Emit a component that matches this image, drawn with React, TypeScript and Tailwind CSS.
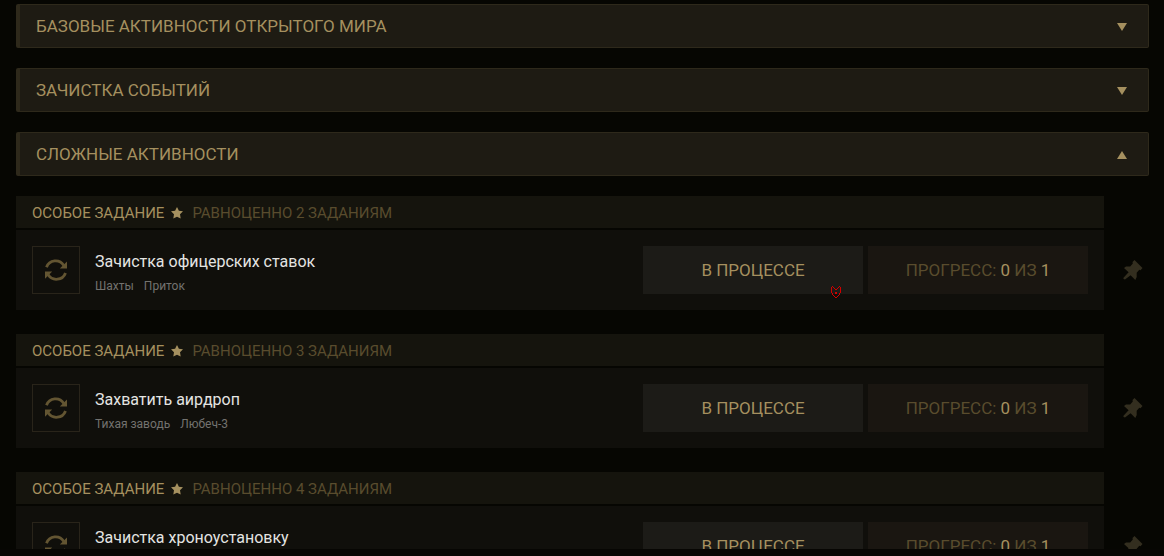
import { useState } from 'react';

type Task = { id: number; equal: number; title: string; places: string[]; done: number; total: number };

const tasks: Task[] = [
  { id: 1, equal: 2, title: 'Зачистка офицерских ставок', places: ['Шахты', 'Приток'], done: 0, total: 1 },
  { id: 2, equal: 3, title: 'Захватить аирдроп', places: ['Тихая заводь', 'Любеч-3'], done: 0, total: 1 },
  { id: 3, equal: 4, title: 'Зачистка хроноустановку', places: [], done: 0, total: 1 },
];

const sections = ['БАЗОВЫЕ АКТИВНОСТИ ОТКРЫТОГО МИРА', 'ЗАЧИСТКА СОБЫТИЙ', 'СЛОЖНЫЕ АКТИВНОСТИ'];

function Arrow({ up }: { up: boolean }) {
  return (
    <svg className="h-2 w-[10px] fill-[#a5905f]" viewBox="0 0 10 8" aria-hidden="true">
      <path d={up ? 'M0 8 5 0l5 8z' : 'M0 0h10L5 8z'} />
    </svg>
  );
}

function Star() {
  return (
    <svg className="h-3 w-3 fill-[#a5905f]" viewBox="0 0 12 12" aria-hidden="true">
      <path d="M6 0l1.900 3.700 4.100.600-3 2.900.700 4.300L6 9.700l-3.700 1.800.700-4.300L0 4.300l4.100-.600z" />
    </svg>
  );
}

function Repeat() {
  return (
    <svg className="h-6 w-6" viewBox="0 0 24 24" aria-hidden="true">
      <g fill="none" stroke="#635532" strokeWidth="2.8">
        <path d="M2.5 9.300A9.700 9.700 0 0 1 19.800 7.400" />
        <path d="M21.500 14.900A9.700 9.700 0 0 1 4.200 16.800" />
      </g>
      <path d="M23 3.400v7.200h-7.200z" fill="#635532" />
      <path d="M1 20.800v-7.200h7.200z" fill="#635532" />
    </svg>
  );
}

function Pin() {
  return (
    <svg className="h-5 w-5 fill-[#332e1f]" viewBox="0 0 20 20" aria-hidden="true">
      <path d="M11.500 0 19.500 8 17.500 10.200 16.300 9.800 13.700 12.800V17L12.300 20 7.600 15.200 2 19.500.500 19V17.800L5.600 12.300 1 7.900 3 6.500H7.200L9.800 3.600 9.500 2z" />
    </svg>
  );
}

function TaskCard({ task }: { task: Task }) {
  return (
    <article className="grid grid-cols-[1fr_45px] gap-y-[2px]">
      <header className="flex h-8 items-center bg-[#15140d] px-4 pt-px text-[15px] leading-5">
        <span className="text-[#a5905f]">ОСОБОЕ ЗАДАНИЕ</span>
        <span className="mr-[9px] ml-[7px]">
          <Star />
        </span>
        <span className="text-[#594c2d]">РАВНОЦЕННО {task.equal} ЗАДАНИЯМ</span>
      </header>
      <div className="col-start-1 flex h-20 items-center bg-[#100f0b] px-4">
        <div className="flex h-12 w-12 shrink-0 items-center justify-center border border-[#29241a]">
          <Repeat />
        </div>
        <div className="ml-[15px] h-12 min-w-0 flex-1">
          <h3 className="pt-1 text-[16px] leading-6 text-[#e4e4e2]">{task.title}</h3>
          <p className="flex gap-[10px] text-[12px] leading-6 text-[#73726f]">
            {task.places.map((place) => (
              <span key={place}>{place}</span>
            ))}
          </p>
        </div>
        <div className="flex gap-[5px] text-[17px]">
          <button type="button" className="h-12 w-[220px] bg-[#1c1b17] pt-px text-[#a5905f]">
            В ПРОЦЕССЕ
          </button>
          <div className="flex h-12 w-[220px] items-center justify-center bg-[#1a1611] pt-px text-[#594c2d]">
            <p>
              ПРОГРЕСС: <span className="text-[#a5905f]">{task.done}</span> ИЗ{' '}
              <span className="text-[#a5905f]">{task.total}</span>
            </p>
          </div>
        </div>
      </div>
      <button type="button" aria-label="Закрепить" className="flex items-center justify-center pl-3">
        <Pin />
      </button>
    </article>
  );
}

export default function App() {
  const [open, setOpen] = useState(2);
  return (
    <div className="flex h-screen flex-col bg-[#070603] font-['Roboto','Liberation_Sans',sans-serif]">
      <main className="relative min-h-0 flex-1 overflow-y-auto bg-[#060602] pt-1 pr-[15px] pl-4 [scrollbar-width:none]">
        <div className="flex flex-col gap-5">
          {sections.map((name, i) => (
            <button
              key={name}
              type="button"
              aria-expanded={open === i}
              onClick={() => setOpen(open === i ? -1 : i)}
              className="flex h-11 items-center justify-between rounded-xs border border-l-4 border-[#2e291b] bg-[#1e1b13] pt-0.5 pr-[21px] pl-4 text-left text-[17px] text-[#a5905f]"
            >
              {name}
              <Arrow up={open === i} />
            </button>
          ))}
          {open === 2 && (
            <section className="flex flex-col gap-6 pb-6">
              {tasks.map((task) => (
                <TaskCard key={task.id} task={task} />
              ))}
            </section>
          )}
        </div>
        <svg className="absolute top-[286px] left-[831px] h-3 w-[10px]" viewBox="0 0 10 12" fill="#d00000" shapeRendering="crispEdges" aria-hidden="true">
          <path d="M1 0h1v1H1zM8 0h1v1H8zM0 1h1v6H0zM2 1h1v1H2zM7 1h1v1H7zM9 1h1v6H9zM3 2h1v1H3zM6 2h1v1H6zM4 3h2v1H4zM4 6h2v2H4zM1 7h1v2H1zM8 7h1v2H8zM2 9h1v1H2zM7 9h1v1H7zM3 10h1v1H3zM6 10h1v1H6zM4 11h2v1H4z" />
        </svg>
      </main>
      <div className="h-[7px] shrink-0" />
    </div>
  );
}
